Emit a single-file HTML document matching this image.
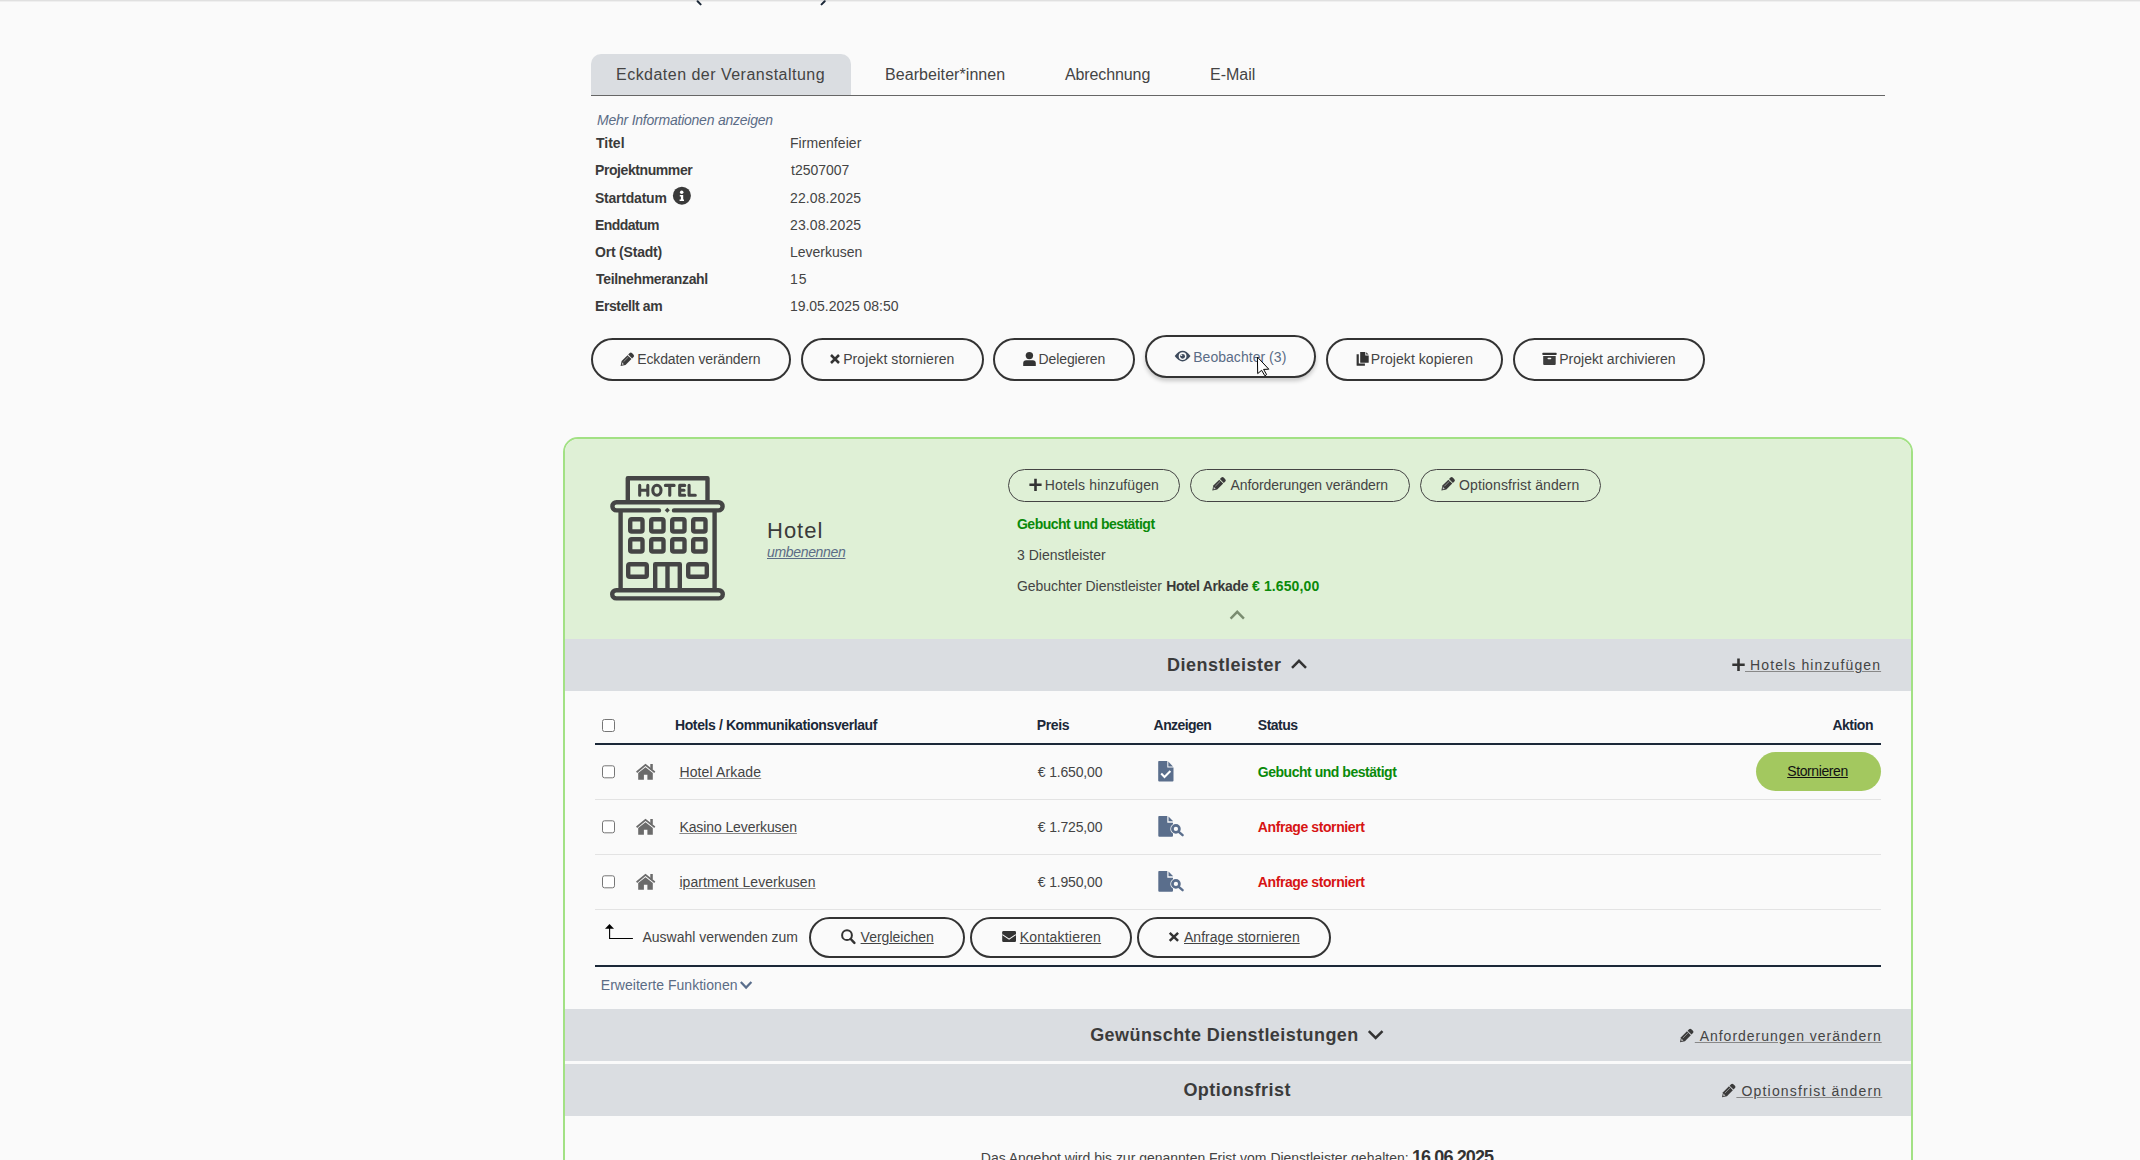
<!DOCTYPE html>
<html><head><meta charset="utf-8"><title>Eckdaten</title>
<style>html,body{margin:0;padding:0}
body{width:2140px;height:1160px;overflow:hidden;position:relative;background:#fafafa;font-family:"Liberation Sans",sans-serif;color:#444}
.a{position:absolute}
.t{position:absolute;white-space:nowrap;line-height:20px}
.btn{position:absolute;box-sizing:border-box;border:2px solid #333;border-radius:22px}
.btn1{position:absolute;box-sizing:border-box;border:1px solid #444;border-radius:17px;height:33px;top:469px}
.sec{position:absolute;left:565px;width:1346px;background:#dadde1}
.rl{position:absolute;left:595px;width:1286px;height:1px;background:#e3e3e3}
svg{overflow:visible}
</style></head>
<body>

<div class="a" style="left:591px;top:54px;width:260px;height:41px;background:#dadde1;border-radius:10px 10px 0 0"></div>
<div class="a" style="left:591px;top:95px;width:1294px;height:1px;background:#666"></div>
<div class="btn" style="left:591px;top:338px;width:200px;height:43px"></div>
<div class="btn" style="left:801px;top:338px;width:183px;height:43px"></div>
<div class="btn" style="left:993px;top:338px;width:142px;height:43px"></div>
<div class="btn" style="left:1145px;top:335px;width:171px;height:43px;box-shadow:0 3px 4px rgba(0,0,0,0.2)"></div>
<div class="btn" style="left:1326px;top:338px;width:177px;height:43px"></div>
<div class="btn" style="left:1513px;top:338px;width:192px;height:43px"></div>
<div class="a" style="left:563px;top:437px;width:1350px;height:760px;box-sizing:border-box;border:2px solid #a2e184;border-radius:15px;background:#fafafa;overflow:hidden">
  <div class="a" style="left:0;top:0;width:1346px;height:200px;background:#dff0d6"></div>
</div>
<div class="btn1" style="left:1008px;width:172px"></div>
<div class="btn1" style="left:1190px;width:220px"></div>
<div class="btn1" style="left:1420px;width:181px"></div>
<div class="sec" style="top:639px;height:52px"></div>
<div class="a" style="left:595px;top:743px;width:1286px;height:2px;background:#1b2838"></div>
<div class="rl" style="top:799px"></div>
<div class="rl" style="top:854px"></div>
<div class="rl" style="top:909px"></div>
<div class="a" style="left:1756px;top:752px;width:125px;height:39px;border-radius:20px;background:#a3c85f"></div>
<div class="btn" style="left:809px;top:917px;width:156px;height:41px"></div>
<div class="btn" style="left:970px;top:917px;width:162px;height:41px"></div>
<div class="btn" style="left:1137px;top:917px;width:194px;height:41px"></div>
<div class="a" style="left:595px;top:965px;width:1286px;height:2px;background:#1b2838"></div>
<div class="sec" style="top:1009px;height:52px"></div>
<div class="sec" style="top:1064px;height:52px"></div>

<svg class="ov" width="2140" height="1160" style="position:absolute;left:0;top:0">
<rect x='0' y='0' width='2140' height='1' fill='#e0e0e0'/><rect x='0' y='1' width='2140' height='1' fill='#efefef'/>
<path d='M697.6,1.3 L700.6,4.4' fill='none' stroke='#1b2838' stroke-width='2' stroke-linecap='round'/>
<path d='M824.7,1.3 L821.6,4.4' fill='none' stroke='#1b2838' stroke-width='2' stroke-linecap='round'/>
<circle cx='681.9' cy='195.7' r='9' fill='#3a3a3a'/>
<circle cx='681.7' cy='192.2' r='1.75' fill='#fff'/><path d='M679.8,195.1 H683.2 V199.4 H684 V201 H679.6 V199.4 H680.9 V196.5 H679.8 Z' fill='#fff'/>
<g transform='translate(620.6,366) rotate(-45)'><path d='M0,0 L4.2,-2.75 H12.6 V2.75 H4.2 Z' fill='#3a3a3a'/><path d='M13.5,-2.75 H15.6 A1.6,1.6 0 0 1 17.2,-1.15 V1.15 A1.6,1.6 0 0 1 15.6,2.75 H13.5 Z' fill='#3a3a3a'/><path d='M5,-0.9 H12' stroke='#fff' stroke-width='0.7' opacity='0.6'/><path d='M1.6,0.2 L3.6,-1.6 L3.6,1.2 Z' fill='#fff' opacity='0.7'/></g>
<path d='M831,355 L839,363 M839,355 L831,363' stroke='#333' stroke-width='2.5'/>
<circle cx='1029.4' cy='355.6' r='3.7' fill='#333'/><path d='M1023.2,366 V363 A3,3 0 0 1 1026.2,360.2 H1032.8 A3,3 0 0 1 1035.8,363 V366 Z' fill='#333'/>
<path d='M1174.7,356.1 Q1182.6,345.2 1190.5,356.1 Q1182.6,367 1174.7,356.1 Z' fill='#3d4a5c'/><circle cx='1182.6' cy='356.1' r='3.9' fill='#fafafa'/><circle cx='1182.6' cy='356.3' r='2.4' fill='#3d4a5c'/><circle cx='1181.6' cy='355.2' r='0.8' fill='#fafafa'/>
<path d='M1356.6,354.3 H1358.8 V363.4 H1364.9 V365.8 H1357.2 A0.6,0.6 0 0 1 1356.6,365.2 Z' fill='#333'/>
<path d='M1360.2,352 H1365.3 V355.6 H1368.7 V362.2 A0.6,0.6 0 0 1 1368.1,362.8 H1360.8 A0.6,0.6 0 0 1 1360.2,362.2 Z' fill='#333'/><path d='M1366.2,352.2 L1368.6,354.6 H1366.2 Z' fill='#333'/>
<rect x='1542.3' y='352.7' width='14.4' height='2.3' rx='0.8' fill='#333'/><path d='M1543.2,356 H1555.7 V363.9 A1,1 0 0 1 1554.7,364.9 H1544.2 A1,1 0 0 1 1543.2,363.9 Z' fill='#3d3d3d'/><rect x='1547.5' y='357.7' width='3.8' height='1.6' rx='0.8' fill='#fafafa'/>
<path d='M1029.4,484.8 H1041.6 M1035.5,478.7 V490.90000000000003' stroke='#333' stroke-width='2.6'/>
<g transform='translate(1212.3,490.5) rotate(-45)'><path d='M0,0 L4.2,-2.75 H12.6 V2.75 H4.2 Z' fill='#3a3a3a'/><path d='M13.5,-2.75 H15.6 A1.6,1.6 0 0 1 17.2,-1.15 V1.15 A1.6,1.6 0 0 1 15.6,2.75 H13.5 Z' fill='#3a3a3a'/><path d='M5,-0.9 H12' stroke='#fff' stroke-width='0.7' opacity='0.6'/><path d='M1.6,0.2 L3.6,-1.6 L3.6,1.2 Z' fill='#fff' opacity='0.7'/></g>
<g transform='translate(1441.4,490.5) rotate(-45)'><path d='M0,0 L4.2,-2.75 H12.6 V2.75 H4.2 Z' fill='#3a3a3a'/><path d='M13.5,-2.75 H15.6 A1.6,1.6 0 0 1 17.2,-1.15 V1.15 A1.6,1.6 0 0 1 15.6,2.75 H13.5 Z' fill='#3a3a3a'/><path d='M5,-0.9 H12' stroke='#fff' stroke-width='0.7' opacity='0.6'/><path d='M1.6,0.2 L3.6,-1.6 L3.6,1.2 Z' fill='#fff' opacity='0.7'/></g>
<path d='M627.8,501 V478.2 H707.5 V501' fill='none' stroke='#454545' stroke-width='4.4' stroke-linejoin='round'/>
<path d='M639.7,485.4 V495.3 M647.8,485.4 V495.3 M639.7,490.3 H647.8 M665.4,485.4 H674.1 M669.75,485.4 V495.3 M684.7,485.4 H679.7 V495.3 H684.7 M679.7,490.3 H684 M689.1,485.4 V495.3 H695.3' fill='none' stroke='#454545' stroke-width='3.1' stroke-linecap='round' stroke-linejoin='round'/>
<ellipse cx='656.9' cy='490.3' rx='4.1' ry='5.0' fill='none' stroke='#454545' stroke-width='3.1'/>
<path d='M616.5,502.2 H718.5 A4.1,4.1 0 0 1 718.5,510.4 H674 M659,510.4 H616.5 A4.1,4.1 0 0 1 616.5,502.2' fill='none' stroke='#454545' stroke-width='4.4' stroke-linecap='round'/>
<rect x='665.5' y='508.4' width='3.6' height='3.6' transform='rotate(45 667.3 510.2)' fill='#454545'/>
<path d='M620.6,511 V588 M714.6,511 V588' stroke='#454545' stroke-width='4.4'/>
<rect x='630.2' y='519.2' width='12.3' height='12.3' rx='1.6' fill='none' stroke='#454545' stroke-width='4.4'/>
<rect x='651.2' y='519.2' width='12.3' height='12.3' rx='1.6' fill='none' stroke='#454545' stroke-width='4.4'/>
<rect x='672.2' y='519.2' width='12.3' height='12.3' rx='1.6' fill='none' stroke='#454545' stroke-width='4.4'/>
<rect x='693.2' y='519.2' width='12.3' height='12.3' rx='1.6' fill='none' stroke='#454545' stroke-width='4.4'/>
<rect x='630.2' y='539.2' width='12.3' height='12.3' rx='1.6' fill='none' stroke='#454545' stroke-width='4.4'/>
<rect x='651.2' y='539.2' width='12.3' height='12.3' rx='1.6' fill='none' stroke='#454545' stroke-width='4.4'/>
<rect x='672.2' y='539.2' width='12.3' height='12.3' rx='1.6' fill='none' stroke='#454545' stroke-width='4.4'/>
<rect x='693.2' y='539.2' width='12.3' height='12.3' rx='1.6' fill='none' stroke='#454545' stroke-width='4.4'/>
<rect x='628.2' y='564.2' width='18.6' height='12.6' rx='1.6' fill='none' stroke='#454545' stroke-width='4.4'/>
<rect x='688.2' y='564.2' width='18.6' height='12.6' rx='1.6' fill='none' stroke='#454545' stroke-width='4.4'/>
<path d='M655.2,588 V564.2 H679.8 V588 M667.5,564.2 V588' fill='none' stroke='#454545' stroke-width='4.4' stroke-linejoin='round'/>
<rect x='612.2' y='590.2' width='110.6' height='8.2' rx='4.1' fill='none' stroke='#454545' stroke-width='4.4'/>
<path d='M1230.6,618.7 L1237.25,611.8 L1243.9,618.7' fill='none' stroke='#7a8c70' stroke-width='2.4' stroke-linejoin='miter'/>
<path d='M1292,667.8 L1299.0,660.8 L1306,667.8' fill='none' stroke='#333' stroke-width='2.5' stroke-linejoin='miter'/>
<path d='M1732.3,664.75 H1744.7 M1738.5,658.55 V670.95' stroke='#333' stroke-width='2.6'/>
<path d='M1368.8,1031.2 L1375.65,1038 L1382.5,1031.2' fill='none' stroke='#333' stroke-width='2.5' stroke-linejoin='miter'/>
<g transform='translate(1680,1042.2) rotate(-45)'><path d='M0,0 L4.2,-2.75 H12.6 V2.75 H4.2 Z' fill='#3a3a3a'/><path d='M13.5,-2.75 H15.6 A1.6,1.6 0 0 1 17.2,-1.15 V1.15 A1.6,1.6 0 0 1 15.6,2.75 H13.5 Z' fill='#3a3a3a'/><path d='M5,-0.9 H12' stroke='#fff' stroke-width='0.7' opacity='0.6'/><path d='M1.6,0.2 L3.6,-1.6 L3.6,1.2 Z' fill='#fff' opacity='0.7'/></g>
<g transform='translate(1722,1097.2) rotate(-45)'><path d='M0,0 L4.2,-2.75 H12.6 V2.75 H4.2 Z' fill='#3a3a3a'/><path d='M13.5,-2.75 H15.6 A1.6,1.6 0 0 1 17.2,-1.15 V1.15 A1.6,1.6 0 0 1 15.6,2.75 H13.5 Z' fill='#3a3a3a'/><path d='M5,-0.9 H12' stroke='#fff' stroke-width='0.7' opacity='0.6'/><path d='M1.6,0.2 L3.6,-1.6 L3.6,1.2 Z' fill='#fff' opacity='0.7'/></g>
<rect x='602.5' y='765.8' width='12' height='12' rx='2' fill='#fff' stroke='#767676' stroke-width='1'/>
<path d='M636.6,772.2 L645.5,764.9 L654.8,772.2' fill='none' stroke='#6b6b6b' stroke-width='1.8'/><rect x='650.3' y='764' width='2.5' height='5.5' fill='#6b6b6b'/><path d='M638.2,779.8 V773 L645.5,767.3 L652.8,773 V779.8 H647.4 V774.7 H643.9 V779.8 Z' fill='#6b6b6b'/>
<rect x='602.5' y='820.8' width='12' height='12' rx='2' fill='#fff' stroke='#767676' stroke-width='1'/>
<path d='M636.6,827.2 L645.5,819.9 L654.8,827.2' fill='none' stroke='#6b6b6b' stroke-width='1.8'/><rect x='650.3' y='819' width='2.5' height='5.5' fill='#6b6b6b'/><path d='M638.2,834.8 V828 L645.5,822.3 L652.8,828 V834.8 H647.4 V829.7 H643.9 V834.8 Z' fill='#6b6b6b'/>
<rect x='602.5' y='875.8' width='12' height='12' rx='2' fill='#fff' stroke='#767676' stroke-width='1'/>
<path d='M636.6,882.2 L645.5,874.9 L654.8,882.2' fill='none' stroke='#6b6b6b' stroke-width='1.8'/><rect x='650.3' y='874' width='2.5' height='5.5' fill='#6b6b6b'/><path d='M638.2,889.8 V883 L645.5,877.3 L652.8,883 V889.8 H647.4 V884.7 H643.9 V889.8 Z' fill='#6b6b6b'/>
<rect x='602.5' y='719.5' width='12' height='12' rx='2' fill='#fff' stroke='#767676' stroke-width='1'/>
<path d='M1159,761 H1167.3 V767.6 H1173.5 V780.6 A1,1 0 0 1 1172.5,781.6 H1159.2 A1,1 0 0 1 1158.2,780.6 V761.8 A0.8,0.8 0 0 1 1159,761 Z' fill='#5a6e8c'/><path d='M1168.3,761.6 L1173,766.4 H1168.3 Z' fill='#5a6e8c'/><path d='M1161.2,773.6 L1164.5,776.9 L1170.4,771.1' fill='none' stroke='#fff' stroke-width='2.1'/>
<path d='M1159.1,815.9 H1167.3 V822.7 H1173 V835.75 A1,1 0 0 1 1172,836.75 H1159.3 A1,1 0 0 1 1158.3,835.75 V816.7 A0.8,0.8 0 0 1 1159.1,815.9 Z' fill='#5a6e8c'/><circle cx='1175.9' cy='828.9' r='5.6' fill='#fafafa'/><path d='M1168.5,816.6 L1173.2,821.3 H1168.5 Z' fill='#5a6e8c'/><circle cx='1175.9' cy='828.9' r='3.5' fill='none' stroke='#5a6e8c' stroke-width='2.7'/><path d='M1178.8000000000002,831.8 L1182.6,835.2' stroke='#5a6e8c' stroke-width='2.4' stroke-linecap='round'/>
<path d='M1159.1,870.9 H1167.3 V877.7 H1173 V890.75 A1,1 0 0 1 1172,891.75 H1159.3 A1,1 0 0 1 1158.3,890.75 V871.7 A0.8,0.8 0 0 1 1159.1,870.9 Z' fill='#5a6e8c'/><circle cx='1175.9' cy='883.9' r='5.6' fill='#fafafa'/><path d='M1168.5,871.6 L1173.2,876.3 H1168.5 Z' fill='#5a6e8c'/><circle cx='1175.9' cy='883.9' r='3.5' fill='none' stroke='#5a6e8c' stroke-width='2.7'/><path d='M1178.8000000000002,886.8 L1182.6,890.2' stroke='#5a6e8c' stroke-width='2.4' stroke-linecap='round'/>
<path d='M605,928.7 L609.5,924 L614,928.7 Z' fill='#000'/><path d='M609.6,928 V938.5 H632.9' fill='none' stroke='#000' stroke-width='1.1'/>
<circle cx='847' cy='935.2' r='4.9' fill='none' stroke='#333' stroke-width='2'/><path d='M850.7,939 L854.4,942.8' stroke='#333' stroke-width='2.5' stroke-linecap='round'/>
<rect x='1002.2' y='931' width='13.8' height='10.9' rx='1.2' fill='#333'/><path d='M1002.4,934.6 L1009.1,939.1 L1015.8,934.6' fill='none' stroke='#fafafa' stroke-width='1.1'/>
<path d='M1169.7,932.8 L1178.1,940.85 M1178.1,932.8 L1169.7,940.85' stroke='#333' stroke-width='2.5'/>
<path d='M740.8,982 L746.0999999999999,987.6 L751.4,982' fill='none' stroke='#5a6e8c' stroke-width='2.2' stroke-linejoin='miter'/>
</svg>
<div id='t0' class='t' style="left:616.00px;top:65px;font-size:16px;font-weight:400;font-style:normal;letter-spacing:0.480px;color:#444;">Eckdaten der Veranstaltung</div>
<div id='t1' class='t' style="left:885.00px;top:65px;font-size:16px;font-weight:400;font-style:normal;letter-spacing:0.067px;color:#444;">Bearbeiter*innen</div>
<div id='t2' class='t' style="left:1065.00px;top:65px;font-size:16px;font-weight:400;font-style:normal;letter-spacing:-0.111px;color:#444;">Abrechnung</div>
<div id='t3' class='t' style="left:1210.00px;top:65px;font-size:16px;font-weight:400;font-style:normal;letter-spacing:0.000px;color:#444;">E-Mail</div>
<div id='t4' class='t' style="left:597.00px;top:110px;font-size:14px;font-weight:400;font-style:italic;letter-spacing:-0.231px;color:#5b6c86;">Mehr Informationen anzeigen</div>
<div id='t5' class='t' style="left:596.00px;top:133px;font-size:14px;font-weight:700;font-style:normal;letter-spacing:-0.000px;color:#3a3a3a;">Titel</div>
<div id='t6' class='t' style="left:595.00px;top:160px;font-size:14px;font-weight:700;font-style:normal;letter-spacing:-0.417px;color:#3a3a3a;">Projektnummer</div>
<div id='t7' class='t' style="left:595.00px;top:188px;font-size:14px;font-weight:700;font-style:normal;letter-spacing:-0.222px;color:#3a3a3a;">Startdatum</div>
<div id='t8' class='t' style="left:595.00px;top:215px;font-size:14px;font-weight:700;font-style:normal;letter-spacing:-0.571px;color:#3a3a3a;">Enddatum</div>
<div id='t9' class='t' style="left:595.00px;top:242px;font-size:14px;font-weight:700;font-style:normal;letter-spacing:-0.200px;color:#3a3a3a;">Ort (Stadt)</div>
<div id='t10' class='t' style="left:596.00px;top:269px;font-size:14px;font-weight:700;font-style:normal;letter-spacing:-0.333px;color:#3a3a3a;">Teilnehmeranzahl</div>
<div id='t11' class='t' style="left:595.00px;top:296px;font-size:14px;font-weight:700;font-style:normal;letter-spacing:-0.400px;color:#3a3a3a;">Erstellt am</div>
<div id='t12' class='t' style="left:790.00px;top:133px;font-size:14px;font-weight:400;font-style:normal;letter-spacing:0.050px;color:#444;">Firmenfeier</div>
<div id='t13' class='t' style="left:791.00px;top:160px;font-size:14px;font-weight:400;font-style:normal;letter-spacing:-0.000px;color:#444;">t2507007</div>
<div id='t14' class='t' style="left:790.00px;top:188px;font-size:14px;font-weight:400;font-style:normal;letter-spacing:0.111px;color:#444;">22.08.2025</div>
<div id='t15' class='t' style="left:790.00px;top:215px;font-size:14px;font-weight:400;font-style:normal;letter-spacing:0.111px;color:#444;">23.08.2025</div>
<div id='t16' class='t' style="left:790.00px;top:242px;font-size:14px;font-weight:400;font-style:normal;letter-spacing:-0.000px;color:#444;">Leverkusen</div>
<div id='t17' class='t' style="left:790.00px;top:269px;font-size:14px;font-weight:400;font-style:normal;letter-spacing:1.000px;color:#444;">15</div>
<div id='t18' class='t' style="left:790.00px;top:296px;font-size:14px;font-weight:400;font-style:normal;letter-spacing:-0.033px;color:#444;">19.05.2025 08:50</div>
<div id='t19' class='t' style="left:637.20px;top:349px;font-size:14px;font-weight:400;font-style:normal;letter-spacing:-0.118px;color:#444;">Eckdaten verändern</div>
<div id='t20' class='t' style="left:843.20px;top:349px;font-size:14px;font-weight:400;font-style:normal;letter-spacing:0.088px;color:#444;">Projekt stornieren</div>
<div id='t21' class='t' style="left:1038.60px;top:349px;font-size:14px;font-weight:400;font-style:normal;letter-spacing:-0.111px;color:#444;">Delegieren</div>
<div id='t22' class='t' style="left:1193.20px;top:346.5px;font-size:14px;font-weight:400;font-style:normal;letter-spacing:0.038px;color:#5b6c86;">Beobachter (3)</div>
<div id='t23' class='t' style="left:1370.80px;top:349px;font-size:14px;font-weight:400;font-style:normal;letter-spacing:0.067px;color:#444;">Projekt kopieren</div>
<div id='t24' class='t' style="left:1559.20px;top:349px;font-size:14px;font-weight:400;font-style:normal;letter-spacing:0.028px;color:#444;">Projekt archivieren</div>
<div id='t25' class='t' style="left:1044.80px;top:475px;font-size:14px;font-weight:400;font-style:normal;letter-spacing:0.125px;color:#444;">Hotels hinzufügen</div>
<div id='t26' class='t' style="left:1230.60px;top:475px;font-size:14px;font-weight:400;font-style:normal;letter-spacing:-0.091px;color:#444;">Anforderungen verändern</div>
<div id='t27' class='t' style="left:1459.00px;top:475px;font-size:14px;font-weight:400;font-style:normal;letter-spacing:0.111px;color:#444;">Optionsfrist ändern</div>
<div id='t28' class='t' style="left:767.00px;top:521px;font-size:22px;font-weight:400;font-style:normal;letter-spacing:1.000px;color:#3a3a3a;">Hotel</div>
<div id='t29' class='t' style="left:767.00px;top:542px;font-size:14px;font-weight:400;font-style:italic;letter-spacing:-0.333px;color:#5b6c86;text-decoration:underline;text-decoration-color:#5b6c86;">umbenennen</div>
<div id='t30' class='t' style="left:1017.00px;top:514px;font-size:14px;font-weight:700;font-style:normal;letter-spacing:-0.525px;color:#0a8a0a;">Gebucht und bestätigt</div>
<div id='t31' class='t' style="left:1017.00px;top:545px;font-size:14px;font-weight:400;font-style:normal;letter-spacing:0.000px;color:#444;">3 Dienstleister</div>
<div id='t32' class='t' style="left:1017.00px;top:576px;font-size:14px;font-weight:400;font-style:normal;letter-spacing:-0.068px;color:#444;">Gebuchter Dienstleister</div>
<div id='t33' class='t' style="left:1166.20px;top:576px;font-size:14px;font-weight:700;font-style:normal;letter-spacing:-0.318px;color:#3a3a3a;">Hotel Arkade</div>
<div id='t34' class='t' style="left:1252.00px;top:576px;font-size:14px;font-weight:700;font-style:normal;letter-spacing:0.111px;color:#0a8a0a;">€ 1.650,00</div>
<div id='t35' class='t' style="left:1167.00px;top:655px;font-size:18px;font-weight:700;font-style:normal;letter-spacing:0.500px;color:#3b3b3b;">Dienstleister</div>
<div id='t36' class='t' style="left:1745.00px;top:655px;font-size:14px;font-weight:400;font-style:normal;letter-spacing:1.118px;color:#444;text-decoration:underline;text-decoration-color:#888;"> Hotels hinzufügen</div>
<div id='t37' class='t' style="left:675.00px;top:715px;font-size:14px;font-weight:700;font-style:normal;letter-spacing:-0.397px;color:#1b2838;">Hotels / Kommunikationsverlauf</div>
<div id='t38' class='t' style="left:1036.80px;top:715px;font-size:14px;font-weight:700;font-style:normal;letter-spacing:-0.375px;color:#1b2838;">Preis</div>
<div id='t39' class='t' style="left:1153.60px;top:715px;font-size:14px;font-weight:700;font-style:normal;letter-spacing:-0.571px;color:#1b2838;">Anzeigen</div>
<div id='t40' class='t' style="left:1257.80px;top:715px;font-size:14px;font-weight:700;font-style:normal;letter-spacing:-0.500px;color:#1b2838;">Status</div>
<div id='t41' class='t' style="left:1832.40px;top:715px;font-size:14px;font-weight:700;font-style:normal;letter-spacing:-0.500px;color:#1b2838;">Aktion</div>
<div id='t42' class='t' style="left:679.40px;top:762px;font-size:14px;font-weight:400;font-style:normal;letter-spacing:0.136px;color:#444;text-decoration:underline;text-decoration-color:#888;">Hotel Arkade</div>
<div id='t43' class='t' style="left:679.40px;top:817px;font-size:14px;font-weight:400;font-style:normal;letter-spacing:-0.094px;color:#444;text-decoration:underline;text-decoration-color:#888;">Kasino Leverkusen</div>
<div id='t44' class='t' style="left:679.40px;top:872px;font-size:14px;font-weight:400;font-style:normal;letter-spacing:0.079px;color:#444;text-decoration:underline;text-decoration-color:#888;">ipartment Leverkusen</div>
<div id='t45' class='t' style="left:1037.80px;top:762px;font-size:14px;font-weight:400;font-style:normal;letter-spacing:-0.167px;color:#444;">€ 1.650,00</div>
<div id='t46' class='t' style="left:1037.80px;top:817px;font-size:14px;font-weight:400;font-style:normal;letter-spacing:-0.167px;color:#444;">€ 1.725,00</div>
<div id='t47' class='t' style="left:1037.80px;top:872px;font-size:14px;font-weight:400;font-style:normal;letter-spacing:-0.167px;color:#444;">€ 1.950,00</div>
<div id='t48' class='t' style="left:1257.80px;top:762px;font-size:14px;font-weight:700;font-style:normal;letter-spacing:-0.475px;color:#0a8a0a;">Gebucht und bestätigt</div>
<div id='t49' class='t' style="left:1257.80px;top:817px;font-size:14px;font-weight:700;font-style:normal;letter-spacing:-0.406px;color:#d71414;">Anfrage storniert</div>
<div id='t50' class='t' style="left:1257.80px;top:872px;font-size:14px;font-weight:700;font-style:normal;letter-spacing:-0.406px;color:#d71414;">Anfrage storniert</div>
<div id='t51' class='t' style="left:1787.20px;top:761px;font-size:14px;font-weight:400;font-style:normal;letter-spacing:-0.389px;color:#111;text-decoration:underline;text-decoration-color:#111;">Stornieren</div>
<div id='t52' class='t' style="left:642.40px;top:927.4px;font-size:14px;font-weight:400;font-style:normal;letter-spacing:0.000px;color:#444;">Auswahl verwenden zum</div>
<div id='t53' class='t' style="left:860.60px;top:927.4px;font-size:14px;font-weight:400;font-style:normal;letter-spacing:-0.000px;color:#444;text-decoration:underline;text-decoration-color:#444;">Vergleichen</div>
<div id='t54' class='t' style="left:1019.80px;top:927.4px;font-size:14px;font-weight:400;font-style:normal;letter-spacing:0.227px;color:#444;text-decoration:underline;text-decoration-color:#444;">Kontaktieren</div>
<div id='t55' class='t' style="left:1184.00px;top:927.4px;font-size:14px;font-weight:400;font-style:normal;letter-spacing:0.029px;color:#444;text-decoration:underline;text-decoration-color:#444;">Anfrage stornieren</div>
<div id='t56' class='t' style="left:600.80px;top:975px;font-size:14px;font-weight:400;font-style:normal;letter-spacing:0.025px;color:#5b6c86;">Erweiterte Funktionen</div>
<div id='t57' class='t' style="left:1090.20px;top:1024.7px;font-size:18px;font-weight:700;font-style:normal;letter-spacing:0.423px;color:#3b3b3b;">Gewünschte Dienstleistungen</div>
<div id='t58' class='t' style="left:1694.80px;top:1025.6px;font-size:14px;font-weight:400;font-style:normal;letter-spacing:0.978px;color:#444;text-decoration:underline;text-decoration-color:#888;"> Anforderungen verändern</div>
<div id='t59' class='t' style="left:1183.40px;top:1079.7px;font-size:18px;font-weight:700;font-style:normal;letter-spacing:0.455px;color:#3b3b3b;">Optionsfrist</div>
<div id='t60' class='t' style="left:1736.40px;top:1080.6px;font-size:14px;font-weight:400;font-style:normal;letter-spacing:1.184px;color:#444;text-decoration:underline;text-decoration-color:#888;"> Optionsfrist ändern</div>
<div id='t61' class='t' style="left:980.80px;top:1148px;font-size:14px;font-weight:400;font-style:normal;letter-spacing:-0.015px;color:#444;">Das Angebot wird bis zur genannten Frist vom Dienstleister gehalten:</div>
<div id='t62' class='t' style="left:1412.00px;top:1147px;font-size:18px;font-weight:700;font-style:normal;letter-spacing:-0.889px;color:#333;">16.06.2025</div>
<svg class='ov' width='2140' height='1160' style='position:absolute;left:0;top:0'><path d='M1257.4,357 L1257.7,373.6 L1261.6,370.3 L1264.9,375.8 L1266.6,374.6 L1263.6,369.4 L1268.8,369.2 Z' fill='#fff' stroke='#000' stroke-width='1' stroke-linejoin='round'/></svg>
</body></html>
